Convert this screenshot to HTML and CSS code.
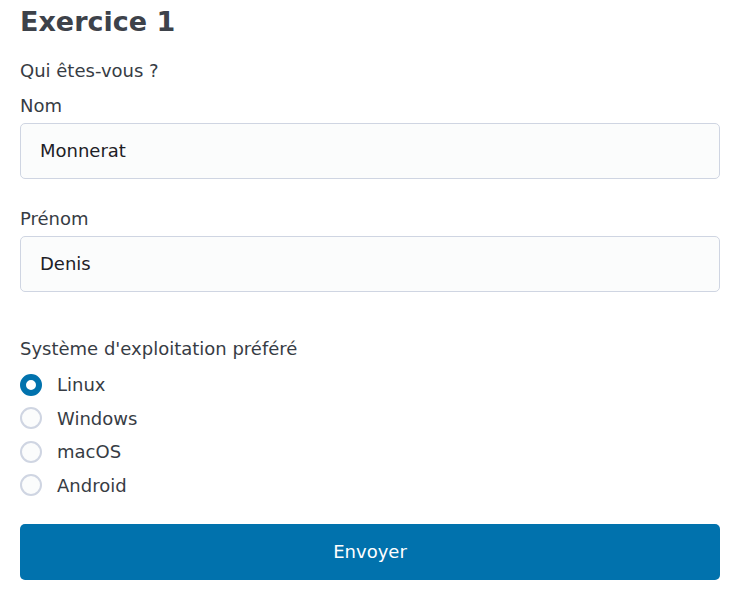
FILE: index.html
```html
<!DOCTYPE html>
<html lang="fr">
<head>
    <meta charset="UTF-8">
    <meta name="viewport" content="width=device-width, initial-scale=1.0">
    <title>Exercice 1</title>
    <link rel="stylesheet" href="styles.css">
</head>
<body>
    <main class="container">
        <h1>Exercice 1</h1>
        <form>
            <p class="intro">Qui êtes-vous ?</p>
            <div class="form-group">
                <label for="nom">Nom</label>
                <input type="text" id="nom" value="Monnerat">
            </div>
            <div class="form-group">
                <label for="prenom">Prénom</label>
                <input type="text" id="prenom" value="Denis">
            </div>
            <fieldset class="choices">
                <legend>Système d'exploitation préféré</legend>
                <label class="choice"><input type="radio" name="os" checked> Linux</label>
                <label class="choice"><input type="radio" name="os"> Windows</label>
                <label class="choice"><input type="radio" name="os"> macOS</label>
                <label class="choice"><input type="radio" name="os"> Android</label>
            </fieldset>
            <button type="submit">Envoyer</button>
        </form>
    </main>
</body>
</html>
```

FILE: styles.css
```css
* {
    margin: 0;
    padding: 0;
    box-sizing: border-box;
}

body {
    font-family: 'DejaVu Sans', sans-serif;
    font-size: 18px;
    line-height: 27px;
    color: #373c44;
    background-color: white;
}

.container {
    padding: 5px 32px 0 20px;
}

h1 {
    font-size: 27px;
    line-height: 1.25;
    color: #3d424a;
    margin-bottom: 18px;
}

.intro {
    margin-bottom: 8px;
}

.form-group {
    margin-bottom: 26px;
}

.form-group label {
    display: block;
    margin-bottom: 4px;
}

input[type="text"] {
    width: 100%;
    height: 56px;
    padding: 0 19px;
    font-family: inherit;
    font-size: 18px;
    color: #1d2026;
    background-color: #fbfcfc;
    border: 1px solid #cfd5e2;
    border-radius: 5px;
    outline: none;
}

.choices {
    border: none;
    margin-top: 43px;
}

.choices legend {
    margin-bottom: 6px;
}

.choice {
    display: flex;
    align-items: center;
    gap: 15px;
    height: 33.5px;
}

input[type="radio"] {
    appearance: none;
    width: 22px;
    height: 22px;
    border: 2px solid #cfd5e2;
    border-radius: 50%;
    background-color: #fbfcfc;
}

input[type="radio"]:checked {
    border: 6px solid #0172ad;
    background-color: white;
}

button {
    display: block;
    width: 100%;
    height: 56px;
    margin-top: 22px;
    font-family: inherit;
    font-size: 18px;
    color: white;
    background-color: #0172ad;
    border: none;
    border-radius: 5px;
    cursor: pointer;
}
```
